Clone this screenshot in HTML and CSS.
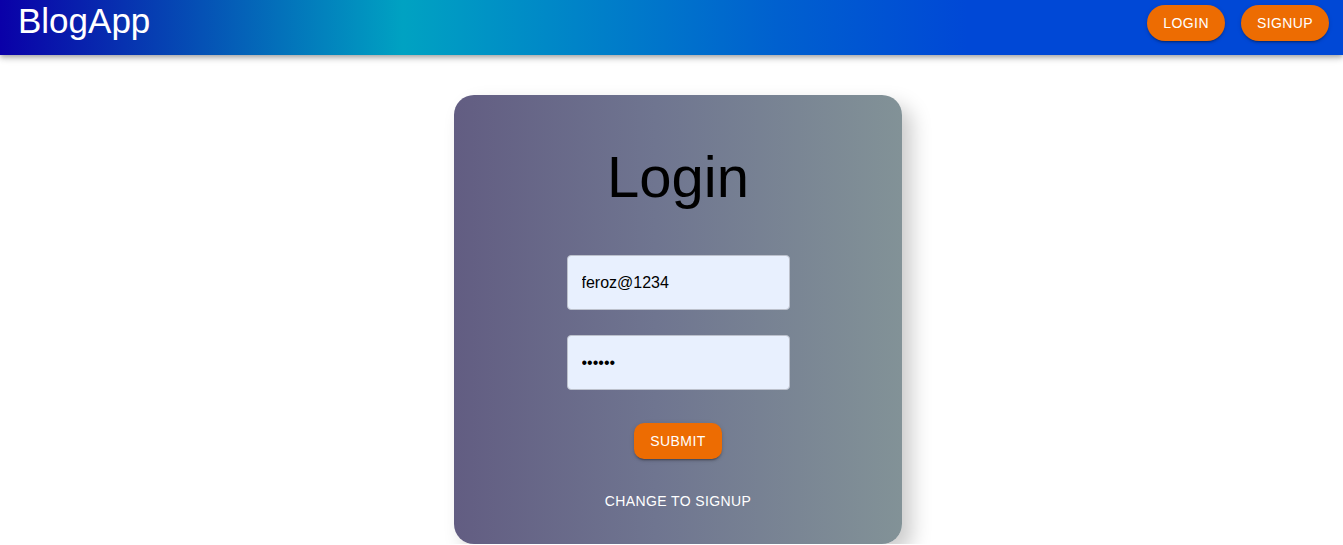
FILE: index.html
```html
<!DOCTYPE html>
<html lang="en">
<head>
<meta charset="utf-8">
<title>BlogApp</title>
<link rel="stylesheet" href="styles.css">
</head>
<body>
<header class="appbar">
  <h1 class="brand">BlogApp</h1>
  <nav class="nav">
    <a class="btn btn-pill" href="#">Login</a>
    <a class="btn btn-pill" href="#">Signup</a>
  </nav>
</header>
<main class="page">
  <form class="card">
    <h2 class="title">Login</h2>
    <input class="field field-first" type="text" value="feroz@1234" placeholder="Email">
    <input class="field field-second" type="password" value="abcdef" placeholder="Password">
    <button class="btn btn-submit" type="button">Submit</button>
    <button class="text-btn" type="button">Change to Signup</button>
  </form>
</main>
</body>
</html>
```

FILE: styles.css
```css
* {
  box-sizing: border-box;
}

body {
  margin: 0;
  background: #ffffff;
  font-family: "Liberation Sans", Arial, sans-serif;
}

.appbar {
  display: flex;
  align-items: flex-start;
  height: 55px;
  background: linear-gradient(90deg, #0a00a8 0%, #00a2c2 30%, #0060cf 58%, #0048d6 72%, #0048d6 100%);
  box-shadow: 0 2px 4px -1px rgba(0, 0, 0, 0.2), 0 4px 5px 0 rgba(0, 0, 0, 0.14), 0 1px 10px 0 rgba(0, 0, 0, 0.12);
  position: relative;
  z-index: 1;
}

.brand {
  margin: 0 0 0 18px;
  font-size: 35px;
  line-height: 41px;
  font-weight: 400;
  color: #ffffff;
}

.nav {
  margin-left: auto;
  margin-right: 14px;
  padding-top: 5px;
  display: flex;
  gap: 16px;
}

.btn {
  display: inline-flex;
  align-items: center;
  justify-content: center;
  height: 36px;
  padding: 0 16px;
  border: none;
  background: #ed6c02;
  color: #ffffff;
  font-family: "Liberation Sans", Arial, sans-serif;
  font-size: 14px;
  font-weight: 500;
  letter-spacing: 0.4px;
  text-transform: uppercase;
  text-decoration: none;
  cursor: pointer;
  box-shadow: 0 3px 1px -2px rgba(0, 0, 0, 0.2), 0 2px 2px 0 rgba(0, 0, 0, 0.14), 0 1px 5px 0 rgba(0, 0, 0, 0.12);
}

.btn-pill {
  border-radius: 18px;
}

.page {
  display: flex;
  justify-content: center;
  padding-top: 40px;
  padding-left: 13px;
}

.card {
  width: 448px;
  display: flex;
  flex-direction: column;
  align-items: center;
  padding: 46px 0 25px;
  border-radius: 20px;
  background: linear-gradient(90deg, #625d82 0%, #6f7590 45%, #829297 100%);
  box-shadow: 10px 10px 20px #cccccc;
}

.title {
  margin: 0;
  font-size: 58px;
  line-height: 72px;
  font-weight: 400;
  color: #000000;
}

.field {
  width: 223px;
  height: 55px;
  padding: 0 14px;
  border: 1px solid #bcc1cc;
  border-radius: 4px;
  background: #e8f0fe;
  color: #000000;
  font-family: "Liberation Sans", Arial, sans-serif;
  font-size: 16px;
  outline: none;
}

.field-first {
  margin-top: 42px;
}

.field-second {
  margin-top: 25px;
}

.btn-submit {
  margin-top: 33px;
  border-radius: 10px;
}

.text-btn {
  margin-top: 24px;
  height: 36px;
  padding: 0 8px;
  border: none;
  background: transparent;
  color: #ffffff;
  font-family: "Liberation Sans", Arial, sans-serif;
  font-size: 14px;
  letter-spacing: 0.4px;
  text-transform: uppercase;
  cursor: pointer;
}
```
